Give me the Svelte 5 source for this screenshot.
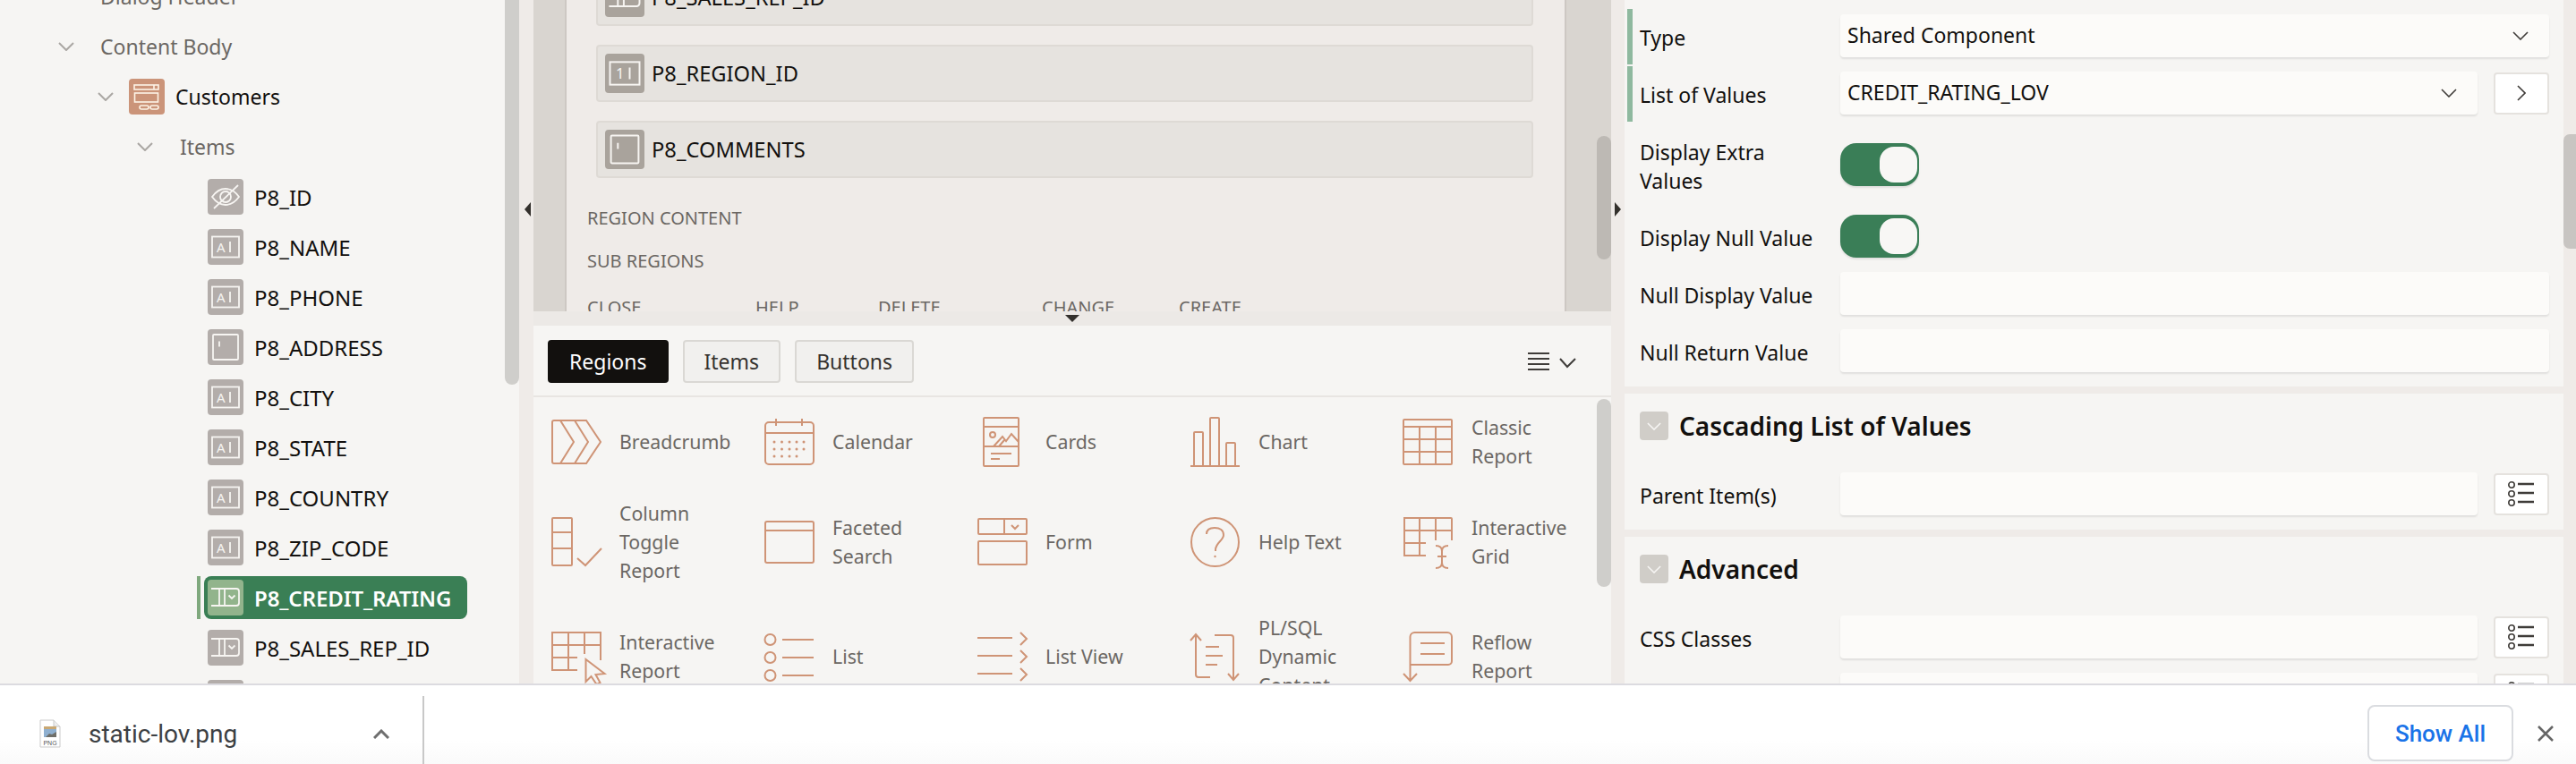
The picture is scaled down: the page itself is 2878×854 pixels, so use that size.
<script>
  const treeItems = [
    { name: 'P8_ID', kind: 'hidden' },
    { name: 'P8_NAME', kind: 'text' },
    { name: 'P8_PHONE', kind: 'text' },
    { name: 'P8_ADDRESS', kind: 'area' },
    { name: 'P8_CITY', kind: 'text' },
    { name: 'P8_STATE', kind: 'text' },
    { name: 'P8_COUNTRY', kind: 'text' },
    { name: 'P8_ZIP_CODE', kind: 'text' },
    { name: 'P8_CREDIT_RATING', kind: 'select', selected: true },
    { name: 'P8_SALES_REP_ID', kind: 'select' },
    { name: '', kind: 'number' }
  ];

  const gallery = [
    { label: 'Breadcrumb', kind: 'breadcrumb' },
    { label: 'Calendar', kind: 'calendar' },
    { label: 'Cards', kind: 'cards' },
    { label: 'Chart', kind: 'chart' },
    { label: 'Classic Report', kind: 'classic' },
    { label: 'Column Toggle Report', kind: 'toggle' },
    { label: 'Faceted Search', kind: 'faceted' },
    { label: 'Form', kind: 'form' },
    { label: 'Help Text', kind: 'help' },
    { label: 'Interactive Grid', kind: 'igrid' },
    { label: 'Interactive Report', kind: 'ireport' },
    { label: 'List', kind: 'list' },
    { label: 'List View', kind: 'listview' },
    { label: 'PL/SQL Dynamic Content', kind: 'plsql' },
    { label: 'Reflow Report', kind: 'reflow' }
  ];
</script>

{#snippet chevron(cls)}
  <svg class={cls} viewBox="0 0 18 10"><path d="M1 1l8 8 8-8" /></svg>
{/snippet}

{#snippet itemGlyph(kind)}
  <svg class="glyph" viewBox="0 0 40 40">
    {#if kind === 'hidden'}
      <path d="M5 20C10 13 15 11 20 11s10 2 15 9c-5 7-10 9-15 9s-10-2-15-9z" />
      <circle cx="20" cy="20" r="6" />
      <path d="M34 7L7 33" />
    {:else if kind === 'text'}
      <rect x="5" y="8.500" width="30" height="23" />
      <text x="10" y="25.500" class="mark">A</text>
      <path d="M25 14v12" />
    {:else if kind === 'number'}
      <rect x="5" y="8.500" width="30" height="23" />
      <text x="11" y="25.500" class="mark">1</text>
      <path d="M25 14v12" />
    {:else if kind === 'area'}
      <rect x="6" y="6" width="28" height="28" rx="1" />
      <path d="M13 13.500v6" />
    {:else if kind === 'select'}
      <path d="M4 10h28a3 3 0 0 1 3 3v13a3 3 0 0 1-3 3H4" />
      <path d="M13 10v19M19 10v19M23.500 17.500l3.500 3.500 3.500-3.500" />
    {/if}
  </svg>
{/snippet}

{#snippet widget(kind)}
  <svg class="widget" viewBox="0 0 56 56">
    {#if kind === 'breadcrumb'}
      <path d="M3 4h36l16 24-16 24H3a2 2 0 0 1-2-2V6a2 2 0 0 1 2-2z" />
      <path d="M10 4l15 24-15 24M26 4l15 24-15 24" />
    {:else if kind === 'calendar'}
      <rect x="1" y="6" width="54" height="47" rx="4" />
      <path d="M1 18h54M13 2v8M42 2v8" />
      {#each [28, 36, 44] as cy, r}
        {#each [11, 19.500, 28, 36, 44] as cx, c}
          {#if r < 2 || c < 4}<circle class="dot" {cx} {cy} r="1.500" />{/if}
        {/each}
      {/each}
    {:else if kind === 'cards'}
      <rect x="7" y="1" width="39" height="54" rx="1" />
      <path d="M7 11h39M7 33h39M15 41h23M15 47h10" />
      <circle cx="17" cy="20" r="3" />
      <path d="M18 33l10-11 4 5 6-8 8 9M24 33l6-7" />
    {:else if kind === 'chart'}
      <path d="M0 55h55M4 55V18a1 1 0 0 1 1-1h8a1 1 0 0 1 1 1v37M22 55V2a1 1 0 0 1 1-1h8a1 1 0 0 1 1 1v53M40 55V30a1 1 0 0 1 1-1h8a1 1 0 0 1 1 1v25" />
    {:else if kind === 'classic'}
      <rect x="0" y="3" width="54" height="50" rx="1" />
      <path d="M0 11h54M0 25h54M0 39h54M18 11v42M36 11v42" />
    {:else if kind === 'toggle'}
      <rect x="1" y="1" width="22" height="53" rx="1" />
      <path d="M1 17h22M1 35h22M29 46l9 8 18-19" />
    {:else if kind === 'faceted'}
      <rect x="1" y="5" width="54" height="46" rx="2" />
      <path d="M1 15h54" />
    {:else if kind === 'form'}
      <rect x="1" y="2" width="54" height="17" rx="1" />
      <rect x="1" y="27" width="54" height="26" rx="1" />
      <path d="M30 2v17M38 9l4 4 4-4" />
    {:else if kind === 'help'}
      <ellipse cx="27.500" cy="28" rx="26.500" ry="27" />
      <path d="M18 19c0-5 4-7 9-7 6 0 10 3 10 8 0 6-8 8-9 16v2" />
      <circle class="dot" cx="27.500" cy="44" r="1.200" />
    {:else if kind === 'igrid'}
      <path d="M54 26V2a1 1 0 0 0-1-1H1v42h24M0 15h54M0 29h25M18 1v42M36 1v25" />
      <path d="M36 32c4 0 7 2 7 6v13c0 4-3 6-7 6M50 32c-4 0-7 2-7 6v13c0 4 3 6 7 6M38 44h10" />
    {:else if kind === 'ireport'}
      <path d="M55 32V1H1v42h28M1 15h54M1 29h28M19 1v42M37 1v24" />
      <path d="M38.500 31v25l6-6 6 9 4-2-5-9 10-1z" />
    {:else if kind === 'list'}
      <circle cx="6.500" cy="9" r="6" />
      <circle cx="6.500" cy="29" r="6" />
      <circle cx="6.500" cy="49" r="6" />
      <path d="M20 9h35M20 29h35M20 49h35" />
    {:else if kind === 'listview'}
      <path d="M0 7h39M0 27h39M0 47h39M48 1l7 7-7 7M48 21l7 7-7 7M48 41l7 7-7 7" />
    {:else if kind === 'plsql'}
      <path d="M0 10l6-7 6 7M6 3v45a3 3 0 0 0 3 3h13M27 4h18a3 3 0 0 1 3 3v46M42 47l6 7 6-7M17 17h15M17 27h19M17 37h13" />
    {:else if kind === 'reflow'}
      <path d="M7.500 54V6a5 5 0 0 1 5-5H49a5 5 0 0 1 5 5v27a4 4 0 0 1-4 4H8M0 47l7.500 8 7.500-8M19 13h27M19 25h27" />
    {/if}
  </svg>
{/snippet}

{#snippet lookup()}
  <button class="side-btn" aria-label="Pick from list">
    <svg class="pick" viewBox="0 0 30 30">
      <circle cx="4" cy="5" r="3.200" /><circle cx="4" cy="15" r="3.200" /><circle cx="4" cy="25" r="3.200" />
      <path class="thick" d="M11 4h18M11 14h18M11 24h18" />
    </svg>
  </button>
{/snippet}

<div class="page">
  <div class="main">
    <aside class="tree">
      <div class="row muted at-2"><span class="text">Dialog Header</span></div>
      <div class="row muted at-2">{@render chevron('tw')}<span class="text">Content Body</span></div>
      <div class="row at-3">
        {@render chevron('tw')}
        <span class="region-glyph">
          <svg viewBox="0 0 40 40">
            <rect x="6" y="7" width="27" height="5" />
            <path d="M28 7v5" />
            <rect x="6.500" y="16" width="26" height="10" />
            <rect x="12" y="30" width="10" height="4" rx="2" />
            <rect x="24" y="30" width="9" height="4" rx="2" />
          </svg>
        </span>
        <span class="text strong node">Customers</span>
      </div>
      <div class="row muted at-4">{@render chevron('tw')}<span class="text">Items</span></div>
      {#each treeItems as item}
        <div class="row leaf" class:selected={item.selected}>
          <span class="leaf-inner">
            {@render itemGlyph(item.kind)}
            <span class="text strong">{item.name}</span>
          </span>
        </div>
      {/each}
      <div class="scroll left-scroll"></div>
    </aside>

    <div class="gutter"><span class="arrow-left"></span></div>

    <section class="center">
      <div class="canvas-wrap">
        <div class="canvas-strip"></div>
        <div class="canvas">
          <div class="slot">{@render itemGlyph('select')}<span>P8_SALES_REP_ID</span></div>
          <div class="slot">{@render itemGlyph('number')}<span>P8_REGION_ID</span></div>
          <div class="slot">{@render itemGlyph('area')}<span>P8_COMMENTS</span></div>
          <div class="caption first">REGION CONTENT</div>
          <div class="caption">SUB REGIONS</div>
          <div class="caption-row">
            <span>CLOSE</span><span>HELP</span><span>DELETE</span><span>CHANGE</span><span>CREATE</span>
          </div>
        </div>
        <div class="canvas-end"><div class="scroll canvas-scroll"></div></div>
      </div>
      <div class="split"><span class="arrow-down"></span></div>
      <div class="palette">
        <div class="tabs">
          <button class="tab on">Regions</button>
          <button class="tab">Items</button>
          <button class="tab">Buttons</button>
          <svg class="view-menu" viewBox="0 0 54 20">
            <path d="M0 1h24M0 7h24M0 13h24M0 19h24" />
            <path d="M36 7l8 9 9-9" />
          </svg>
        </div>
        <div class="gallery">
          {#each gallery as g}
            <div class="cell">
              {@render widget(g.kind)}
              <span class="cell-label">{g.label}</span>
            </div>
          {/each}
        </div>
        <div class="scroll gallery-scroll"></div>
      </div>
    </section>

    <div class="gutter right-gutter"><span class="arrow-right"></span></div>

    <aside class="props">
      <div class="group first-group">
        <div class="prop changed">
          <span class="prop-label">Type</span>
          <div class="field select">Shared Component{@render chevron('field-caret')}</div>
        </div>
        <div class="prop changed">
          <span class="prop-label">List of Values</span>
          <div class="field select">CREDIT_RATING_LOV{@render chevron('field-caret')}</div>
          <button class="side-btn" aria-label="Go to list of values">
            <svg class="go" viewBox="0 0 10 18"><path d="M1 1l8 8-8 8" /></svg>
          </button>
        </div>
        <div class="prop tall">
          <span class="prop-label">Display Extra Values</span>
          <span class="switch"><span class="knob"></span></span>
        </div>
        <div class="prop after-tall">
          <span class="prop-label">Display Null Value</span>
          <span class="switch"><span class="knob"></span></span>
        </div>
        <div class="prop">
          <span class="prop-label">Null Display Value</span>
          <div class="field"></div>
        </div>
        <div class="prop">
          <span class="prop-label">Null Return Value</span>
          <div class="field"></div>
        </div>
      </div>
      <div class="group">
        <div class="group-head">
          <span class="collapse">{@render chevron('collapse-caret')}</span>
          <h3>Cascading List of Values</h3>
        </div>
        <div class="prop">
          <span class="prop-label">Parent Item(s)</span>
          <div class="field"></div>
          {@render lookup()}
        </div>
      </div>
      <div class="group">
        <div class="group-head">
          <span class="collapse">{@render chevron('collapse-caret')}</span>
          <h3>Advanced</h3>
        </div>
        <div class="prop">
          <span class="prop-label">CSS Classes</span>
          <div class="field"></div>
          {@render lookup()}
        </div>
        <div class="prop">
          <span class="prop-label"></span>
          <div class="field"></div>
          {@render lookup()}
        </div>
      </div>
      <div class="scroll props-scroll"></div>
    </aside>
  </div>

  <footer class="downloads">
    <div class="dl-item">
      <svg class="file" viewBox="0 0 24 32">
        <path class="sheet" d="M1 1h15l7 7v23H1z" />
        <path class="fold" d="M16 1v7h7" />
        <rect x="5" y="8" width="14" height="12" fill="#8fb0d0" />
        <path d="M5 11h14V8H5z" fill="#c9a873" />
        <path d="M7 20l4-4 3 1 5-3v6z" fill="#6f6f69" />
        <text x="12" y="28.500" class="file-tag">PNG</text>
      </svg>
      <span class="dl-name">static-lov.png</span>
      <svg class="dl-caret" viewBox="0 0 18 11"><path d="M1 10l8-8 8 8" /></svg>
    </div>
    <div class="dl-sep"></div>
    <button class="show-all">Show All</button>
    <svg class="dl-close" viewBox="0 0 18 18"><path d="M1 1l16 16M17 1L1 17" /></svg>
  </footer>
</div>

<style>
  :global(body) {
    margin: 0;
    background: #fff;
  }
  .page {
    width: 2878px;
    height: 854px;
    display: flex;
    flex-direction: column;
    overflow: hidden;
    font-family: "Noto Sans", sans-serif;
    font-size: 24px;
    color: #12100e;
  }
  .main {
    height: 764px;
    flex: none;
    display: flex;
    background: #efebe8;
    overflow: hidden;
  }
  .scroll {
    position: absolute;
    border-radius: 8px;
    background: #cfcecb;
  }

  /* tree */
  .tree {
    position: relative;
    width: 580px;
    height: 764px;
    flex: none;
    overflow: hidden;
    background: #f6f5f3;
    padding-top: 1px;
    box-sizing: border-box;
  }
  .tree > .row:first-child {
    margin-top: -33px;
  }
  .left-scroll {
    right: 0;
    top: -10px;
    width: 16px;
    height: 440px;
  }
  .row {
    height: 56px;
    display: flex;
    align-items: center;
    flex: none;
  }
  .row .text {
    white-space: nowrap;
  }
  .muted {
    color: #6b6763;
    font-size: 23px;
  }
  .node {
    font-size: 23px;
  }
  .strong {
    color: #12100e;
  }
  .tw {
    width: 18px;
    height: 10px;
    fill: none;
    stroke: #aaa7a3;
    stroke-width: 2;
  }
  .at-2 {
    padding-left: 112px;
  }
  .at-2 .tw {
    margin-left: -47px;
    margin-right: 29px;
  }
  .at-3 {
    padding-left: 109px;
  }
  .at-3 .tw {
    margin-right: 17px;
  }
  .at-4 {
    padding-left: 153px;
  }
  .at-4 .tw {
    margin-right: 30px;
  }
  .region-glyph {
    width: 40px;
    height: 40px;
    border-radius: 4px;
    background: #cb9479;
    margin-right: 12px;
  }
  .region-glyph svg {
    display: block;
    fill: none;
    stroke: #fdf3e6;
    stroke-width: 1.600;
  }
  .leaf {
    padding-left: 228px;
  }
  .leaf-inner {
    display: flex;
    align-items: center;
    height: 48px;
    padding: 0 12px 0 4px;
    gap: 12px;
    border-radius: 8px;
  }
  .selected {
    position: relative;
  }
  .selected::before {
    content: "";
    position: absolute;
    left: 220px;
    top: 4px;
    bottom: 4px;
    width: 4px;
    background: #7fa87d;
  }
  .selected .leaf-inner {
    width: 294px;
    box-sizing: border-box;
    background: #3a7f55;
  }
  .selected .strong {
    color: #fff;
    font-weight: 600;
    letter-spacing: -0.1px;
  }
  .selected .glyph {
    background: #92b48c;
  }
  .glyph {
    width: 40px;
    height: 40px;
    flex: none;
    border-radius: 4px;
    background: #b3adaa;
    fill: none;
    stroke: #f7f5f2;
    stroke-width: 1.800;
  }
  .mark {
    font-family: "Noto Sans", sans-serif;
    font-size: 15px;
    fill: #f7f5f2;
    stroke: none;
  }

  /* gutters */
  .gutter {
    width: 16px;
    flex: none;
    display: flex;
    justify-content: center;
    padding-top: 226px;
    box-sizing: border-box;
  }
  .arrow-left,
  .arrow-right,
  .arrow-down {
    width: 0;
    height: 0;
    border-style: solid;
  }
  .arrow-left {
    margin-left: 2px;
    border-width: 8px 7px 8px 0;
    border-color: transparent #33302c transparent transparent;
  }
  .right-gutter {
    width: 15px;
  }
  .arrow-right {
    margin-right: 1px;
    border-width: 8px 0 8px 7px;
    border-color: transparent transparent transparent #33302c;
  }

  /* page canvas */
  .center {
    width: 1204px;
    flex: none;
    display: flex;
    flex-direction: column;
  }
  .canvas-wrap {
    height: 348px;
    display: flex;
    flex: none;
    overflow: hidden;
  }
  .canvas-strip {
    width: 35px;
    flex: none;
    background: #d9d5d0;
    border-right: 2px solid #cdc8c3;
  }
  .canvas {
    width: 1115px;
    flex: none;
    box-sizing: border-box;
    padding: 0 35px 0 23px;
    background: #efebe8;
  }
  .canvas-end {
    position: relative;
    flex: 1;
    background: #d9d5d0;
    border-left: 2px solid #cdc8c3;
  }
  .canvas-scroll {
    right: 0;
    top: 152px;
    width: 16px;
    height: 138px;
    background: #bdb9b4;
  }
  .slot {
    height: 64px;
    box-sizing: border-box;
    margin: 0 0 21px 10px;
    display: flex;
    align-items: center;
    gap: 8px;
    padding-left: 8px;
    border: 2px solid #dedad5;
    border-radius: 4px;
    background: #e6e3df;
    font-size: 23.700px;
  }
  .slot:first-child {
    margin-top: -35px;
  }
  .slot .glyph {
    width: 44px;
    height: 44px;
    background: #a9a39c;
  }
  .caption {
    height: 48px;
    line-height: 48px;
    font-size: 20px;
    color: #6b6763;
  }
  .caption.first {
    margin-top: 2px;
  }
  .caption-row {
    display: grid;
    grid-template-columns: 188px 137px 183px 153px auto;
    margin-top: 4px;
    height: 48px;
    line-height: 48px;
    font-size: 20px;
    color: #6b6763;
  }
  .split {
    height: 16px;
    flex: none;
    background: #ece9e6;
    display: flex;
    justify-content: center;
    padding-top: 4px;
    box-sizing: border-box;
  }
  .arrow-down {
    border-width: 8px 8px 0 8px;
    border-color: #33302c transparent transparent transparent;
  }

  /* palette */
  .palette {
    position: relative;
    flex: 1;
    min-height: 0;
    overflow: hidden;
    background: #f6f5f3;
  }
  .tabs {
    height: 80px;
    box-sizing: border-box;
    display: flex;
    align-items: flex-start;
    gap: 16px;
    padding: 16px 39px 0 16px;
    border-bottom: 2px solid #e8e5e2;
  }
  .tab {
    height: 48px;
    padding: 0 22px;
    font: inherit;
    font-size: 23px;
    color: #35322f;
    background: #f1f0ee;
    border: 2px solid #dad8d4;
    border-radius: 4px;
  }
  .tab.on {
    background: #12100e;
    border-color: #12100e;
    color: #fff;
  }
  .view-menu {
    width: 54px;
    height: 20px;
    margin: 14px 0 0 auto;
    fill: none;
    stroke: #3f3c39;
    stroke-width: 2;
  }
  .gallery {
    display: grid;
    grid-template-columns: repeat(5, 238px);
    row-gap: 32px;
    padding: 18px 0 0 20px;
  }
  .cell {
    display: flex;
    align-items: center;
    gap: 20px;
  }
  .widget {
    width: 56px;
    height: 56px;
    flex: none;
    overflow: visible;
    fill: none;
    stroke: #cf9476;
    stroke-width: 2;
  }
  .dot {
    fill: #cf9476;
    stroke: none;
  }
  .cell-label {
    width: 136px;
    font-size: 21.300px;
    line-height: 32px;
    color: #6b6763;
  }
  .gallery-scroll {
    right: 0;
    top: 82px;
    width: 16px;
    height: 210px;
  }

  /* property editor */
  .props {
    position: relative;
    flex: 1;
    min-width: 0;
    padding-right: 14px;
  }
  .group {
    background: #f6f5f3;
    padding-bottom: 8px;
    margin-bottom: 8px;
  }
  .first-group {
    padding-top: 10px;
  }
  .prop {
    position: relative;
    display: flex;
    align-items: center;
    padding: 8px 16px 8px 17px;
  }
  .prop.changed {
    padding-top: 6px;
    padding-bottom: 10px;
  }
  .prop.changed::before {
    content: "";
    position: absolute;
    left: 3px;
    top: 0;
    bottom: 2px;
    width: 6px;
    background: #8fb99f;
  }
  .prop.tall {
    padding-top: 12px;
    padding-bottom: 6px;
  }
  .prop.after-tall {
    padding-top: 16px;
  }
  .prop-label {
    width: 224px;
    flex: none;
    box-sizing: border-box;
    padding: 4px 20px 0 0;
    font-size: 23px;
    line-height: 32px;
  }
  .field {
    position: relative;
    flex: 1;
    height: 48px;
    line-height: 46px;
    padding-left: 8px;
    box-sizing: border-box;
    font-size: 23px;
    background: #fcfbf9;
    border-radius: 4px;
    box-shadow: 0 2px 2px rgba(0, 0, 0, 0.09);
  }
  .field-caret {
    position: absolute;
    right: 23px;
    top: 19px;
    width: 18px;
    height: 10px;
    fill: none;
    stroke: #3f3c39;
    stroke-width: 1.600;
  }
  .side-btn {
    width: 62px;
    height: 47px;
    flex: none;
    margin-left: 18px;
    padding: 0;
    display: flex;
    align-items: center;
    justify-content: center;
    background: #fff;
    border: 2px solid #e5e2de;
    border-radius: 4px;
  }
  .go {
    width: 10px;
    height: 18px;
    fill: none;
    stroke: #3f3c39;
    stroke-width: 1.600;
  }
  .pick {
    width: 30px;
    height: 30px;
    fill: none;
    stroke: #3f3c39;
    stroke-width: 1.600;
  }
  .pick .thick {
    stroke-width: 2.500;
  }
  .switch {
    width: 88px;
    height: 48px;
    display: flex;
    justify-content: flex-end;
    align-items: center;
    padding-right: 2px;
    box-sizing: border-box;
    background: #3a7e57;
    border-radius: 18px;
    box-shadow: 0 2px 2px rgba(0, 0, 0, 0.09);
  }
  .knob {
    width: 42px;
    height: 40px;
    border-radius: 16px;
    background: #f8f7f5;
  }
  .group-head {
    display: flex;
    align-items: center;
    gap: 12px;
    height: 32px;
    padding: 20px 0 28px 17px;
  }
  .group-head h3 {
    margin: 0;
    font-size: 28px;
    font-weight: 600;
    color: #12100e;
  }
  .collapse {
    width: 32px;
    height: 32px;
    border-radius: 4px;
    background: #d0cdc8;
    display: flex;
    align-items: center;
    justify-content: center;
  }
  .collapse-caret {
    width: 16px;
    height: 9px;
    fill: none;
    stroke: #f6f5f3;
    stroke-width: 1.800;
  }
  .props-scroll {
    right: 0;
    top: 150px;
    width: 14px;
    height: 128px;
    background: #c8c5c2;
    border-radius: 7px 0 0 7px;
  }

  /* download shelf */
  .downloads {
    height: 90px;
    box-sizing: border-box;
    flex: none;
    display: flex;
    align-items: center;
    border-top: 2px solid #dcdbe0;
    background: linear-gradient(#fff 70%, #fafafa);
  }
  .dl-item {
    width: 472px;
    flex: none;
    display: flex;
    align-items: center;
    box-sizing: border-box;
    padding: 20px 0 0 44px;
  }
  .file {
    width: 24px;
    height: 32px;
  }
  .sheet {
    fill: #fff;
    stroke: #c9c9c9;
  }
  .fold {
    fill: #eee;
    stroke: #c9c9c9;
  }
  .file-tag {
    font-family: "Liberation Sans", sans-serif;
    font-size: 7px;
    text-anchor: middle;
    fill: #555;
  }
  .dl-name {
    margin-left: 31px;
    font-family: Roboto, sans-serif;
    font-size: 28px;
    color: #3c4043;
  }
  .dl-caret {
    width: 18px;
    height: 11px;
    margin-left: auto;
    margin-right: 37px;
    fill: none;
    stroke: #6e6e6e;
    stroke-width: 3;
  }
  .dl-sep {
    width: 2px;
    align-self: flex-end;
    height: 76px;
    background: #c8c8c8;
  }
  .show-all {
    width: 163px;
    height: 63px;
    margin: 19px 0 0 auto;
    font-family: Roboto, sans-serif;
    font-size: 26px;
    font-weight: 500;
    color: #1a73e8;
    background: #fff;
    border: 2px solid #dadce0;
    border-radius: 8px;
  }
  .dl-close {
    width: 18px;
    height: 18px;
    margin: 20px 25px 0 27px;
    fill: none;
    stroke: #666;
    stroke-width: 2.500;
  }
</style>
